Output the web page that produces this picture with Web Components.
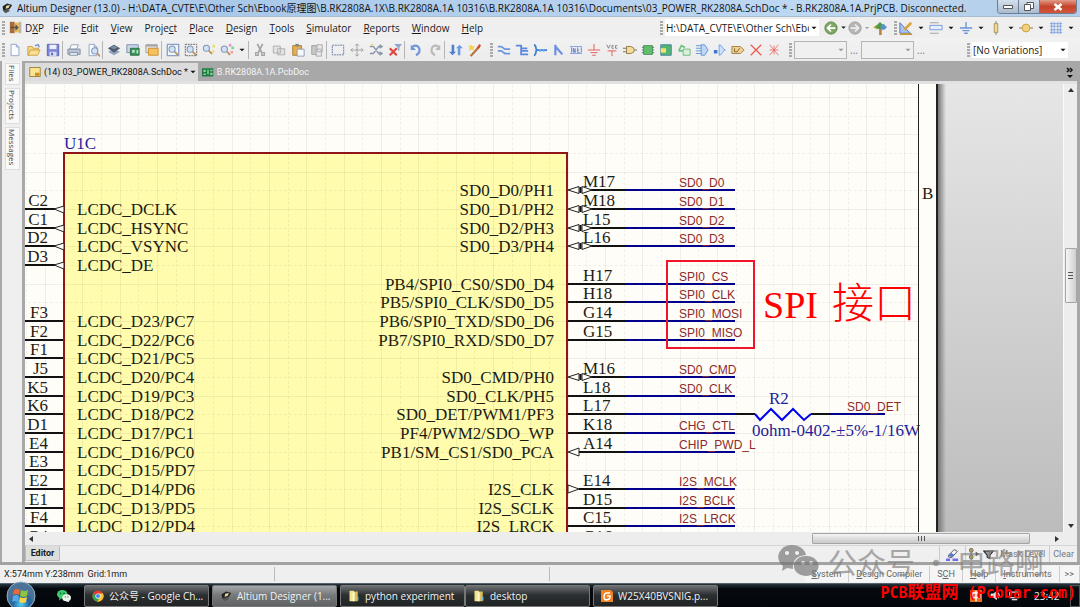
<!DOCTYPE html>
<html lang="en">
<head>
<meta charset="utf-8">
<title>Altium Designer (13.0)</title>
<style>
html, body { height: 100%; margin: 0; }
body { overflow: hidden; font: 10px/14px "Open Sans", "Noto Sans CJK SC", sans-serif; color: #1a1a1a; background: #efefef; }
</style>
</head>
<body>
<altium-app></altium-app>
<script>
const BASE = `
*{box-sizing:border-box}
button,select{font:inherit;color:inherit;margin:0;padding:0;border:0;background:none;border-radius:0}
button{display:flex;align-items:center;justify-content:center;white-space:nowrap}
select{appearance:none;outline:0}
a{color:inherit;text-decoration:none}
svg{display:block;flex:none}
`;
function define(name, css, html) {
  customElements.define(name, class extends HTMLElement {
    constructor() {
      super();
      const root = this.attachShadow({ mode: 'open' });
      root.innerHTML = `<style>${BASE}${css}</style>${typeof html === 'function' ? html(this) : html}`;
    }
  });
}

const page = '<path d="M3.500 1.500h6l3 3v10h-9z" fill="#fafcff" stroke="#8aa0c4"/><path d="M9.500 1.500v3h3" fill="#dbe6f5" stroke="#8aa0c4"/>';
const lens = (x, y) => `<circle cx="${x}" cy="${y}" r="3.500" fill="#cfe2f8" stroke="#8195b0" stroke-width="1.200"/><path d="M${x + 3} ${y + 3}l3.500 3.500" stroke="#c08a45" stroke-width="2"/>`;
const ICONS = {
  logo: '<path d="M2 6l6-4 7 2-4 6-8 1z" fill="#222"/><path d="M7 5l5-1-2 4-4 1z" fill="#e9d9a0"/><path d="M2 11l7-1 3 2-6 3z" fill="#555"/>',
  dxp: '<path d="M1 1h6v14H1z" fill="#a86b3c"/><path d="M7 2h8v12H7z" fill="#e8bb55"/><path d="M2 7h6V4l4 4-4 4V9H2z" fill="#5c5148"/><path d="M12 1h3v14h-3z" fill="#b9b5ac"/>',
  new: page,
  open: '<path d="M1 14V4h5l1 2h6v3" fill="#f5d78a" stroke="#c89a3c"/><path d="M1 14l3-6h11l-3 6z" fill="#fbdf93" stroke="#c89a3c"/><path d="M9 3l4-1 1 3" fill="none" stroke="#6d8fc4" stroke-width="1.500"/>',
  save: '<path d="M1.500 1.500h13v13h-13z" fill="#7d86d8" stroke="#565eae"/><path d="M4 2h8v5H4z" fill="#eef1fb"/><path d="M4 10h8v5H4z" fill="#d5d9f2"/><path d="M6 11h2v3H6z" fill="#565eae"/>',
  print: '<path d="M5 2h8l-2 5H3z" fill="#fff" stroke="#8c9cb5"/><path d="M1 7h14v6H1z" fill="#b8c3d4" stroke="#7a889f"/><path d="M3 11h9v3H3z" fill="#eef3f9" stroke="#7a889f"/>',
  preview: page + lens(10, 9),
  layers: '<path d="M8 7l7 3-7 4-7-4z" fill="#93a6bd"/><path d="M8 2l7 4-7 5-7-5z" fill="#4f5d73"/><path d="M8 3l4 2-4 2-4-2z" fill="#7f8ea5"/>',
  pcbwin: '<path d="M1 2h13v9H1z" fill="#cbd8ea" stroke="#7288ab"/><path d="M5 6h10v8H5z" fill="#35935a" stroke="#256b40"/><path d="M7 8h3v3H7zM12 8h2v4h-2z" fill="#bfe3c7"/>',
  schwin: '<path d="M1 2h13v9H1z" fill="#e3e3e3" stroke="#999"/><path d="M1 2h13v2H1z" fill="#a4a4a4"/><path d="M4 6h11v8H4z" fill="#f6c25c" stroke="#c98d28"/>',
  zoompage: '<path d="M1.500 1.500h13v13h-13z" fill="#f0f5fb" stroke="#8aa0c4" stroke-width="1.500"/>' + lens(7, 7),
  zoomsel: '<path d="M1.500 1.500h13v13h-13z" fill="none" stroke="#555" stroke-dasharray="2 1"/>' + lens(7, 7),
  zoomobj: lens(5, 6) + '<path d="M12 2h3v3h-3zM12 8h2v3h-2z" fill="#e9dc6b"/>',
  zoomcol: lens(5, 7) + '<path d="M10 1h3v3h-3z" fill="#e88fd8"/><path d="M13 4h3v3h-3z" fill="#79d68b"/><path d="M12 9h3v3h-3z" fill="#f29f9f"/>',
  cut: '<path d="M5 1l5 10M11 1L6 11" stroke="#a6a6a6" stroke-width="2"/><path d="M3 11h3v3H3zM10 11h3v3h-3z" fill="none" stroke="#a6a6a6" stroke-width="1.500"/>',
  copy: '<path d="M1.500 3.500h8v8h-8zM6.500 6.500h8v7h-8z" fill="#e2e2e2" stroke="#aaa"/>',
  paste: '<path d="M2 3h10v11H2z" fill="#e8b04a" stroke="#a8772a"/><path d="M5 1h4v3H5z" fill="#888"/><path d="M7 7h8v8H7z" fill="#f4f7fc" stroke="#8a98b5"/>',
  pastes: '<path d="M2 3h9v10H2z" fill="#c9c9c9" stroke="#9d9d9d"/><path d="M8 2h6v8H8zM7 7h6v8H7z" fill="#e9e9e9" stroke="#a5a5a5"/>',
  select: '<path d="M1.500 2.500h13v11h-13z" fill="none" stroke="#506a94" stroke-dasharray="2 1"/>',
  move: '<path d="M8 1v14M1 8h14M6 3l2-2 2 2M6 13l2 2 2-2M3 6L1 8l2 2M13 6l2 2-2 2" fill="none" stroke="#999"/>',
  shuffle: '<path d="M1 4h4l6 8h4M1 12h4l6-8h4M12 2l3 2-3 2M12 10l3 2-3 2" fill="none" stroke="#8a97a8" stroke-width="1.500"/><path d="M2 1h3v2H2z" fill="#e8df7a"/>',
  clear: '<path d="M2 6l8 8M10 6l-8 8" stroke="#e2473f" stroke-width="2.500"/><path d="M7 1h9l-3 4v4l-2-1V5z" fill="#8fa7cc"/>',
  undo: '<path d="M4 4c8-4 11 6 4 10" fill="none" stroke="#6f95d8" stroke-width="2.500"/><path d="M2 2v6h6z" fill="#6f95d8"/>',
  redo: '<path d="M12 4C4 0 1 10 8 14" fill="none" stroke="#b9b9b9" stroke-width="2.500"/><path d="M14 2v6H8z" fill="#b9b9b9"/>',
  updown: '<path d="M3 2h3v8h2l-4 4-4-4h3z" fill="#4f7fd0"/><path d="M10 14h3V6h3l-4-4-4 4h2z" fill="#6c9be4"/>',
  wand: '<path d="M3 15L13 4" stroke="#b5713a" stroke-width="2.500"/><path d="M3 1l2 3 3-1-2 3 2 3-4-2-3 2 1-4-2-2h3z" fill="#f6cf4c"/><path d="M11 6l3-4" stroke="#d64c3b" stroke-width="2.500"/>',
  wire: '<path d="M1 4h4l4 3h6M1 9h4l4 3h6" fill="none" stroke="#6c96e0" stroke-width="2"/>',
  bus: '<path d="M1 3h6v10h8M7 6h7M7 9h8" fill="none" stroke="#5c87dc" stroke-width="2"/>',
  harness: '<path d="M1 2c3 0 2 5 3 6-1 1 0 6-3 6M4 8h12" fill="none" stroke="#3f7fd0" stroke-width="2"/><path d="M7 7h2v3H7zM11 7h2v3h-2z" fill="#6cb3f0"/>',
  entry: '<path d="M5 2v12M5 4l8 9" fill="none" stroke="#6c8fe0" stroke-width="2.500"/>',
  net: '<path d="M1 4h14M1 12h14" stroke="#7f9fe0"/><path d="M3 5v6M5 11V6l2 5V6M9 8h2M10 5v6h2M14 5v6" stroke="#5677c4" fill="none"/>',
  gnd: '<path d="M8 1v7M1 8h14M4 11h8M6 14h4" stroke="#e0504a"/>',
  vcc: '<path d="M3 9h10M8 9v6" stroke="#e0504a"/><path d="M2 2l2 4 2-4M10 3H8v3h2M14 3h-2v3h2" fill="none" stroke="#777"/>',
  gate: '<path d="M0 6h4M0 10h4M12 8h4" stroke="#666"/><path d="M4 4h5q4 1 4 4t-4 4H4z" fill="#f3dc9c" stroke="#8b733d"/>',
  part: '<path d="M1 5h14M1 8h14M1 11h14" stroke="#496a8a"/><path d="M3 3h10v10H3z" fill="#5fbf6c" stroke="#438a4c"/>',
  sheet: '<path d="M2 2h12v12H2z" fill="#56b472" stroke="#3d7ea0"/><path d="M2 6h6v5H2z" fill="#f4e36c"/>',
  recycle: '<path d="M2 9l3-6 4 2M2 9h5" fill="none" stroke="#6cc482" stroke-width="2"/><path d="M7 7h8v7H7z" fill="#d9efdc" stroke="#66b877"/>',
  ports: '<path d="M1 3h7M1 6h7M1 9h7M1 12h7" stroke="#5d8fd6"/><path d="M7 2h4l4 6-4 6H7z" fill="#bcd8f6" stroke="#5d8fd6"/>',
  portx: '<path d="M1 8h4v4H1z" fill="#4474c8"/><path d="M7 2c4 0 3 5 7 6-4 1-3 6-7 6z" fill="#cfe2fa" stroke="#6f9be0"/>',
  tag: '<path d="M1 4h10l4 4-4 4H1z" fill="#eed090" stroke="#a07b3a"/><path d="M4 6v4h3l3-4" fill="none" stroke="#7b5c28"/>',
  noerc: '<path d="M2 2l12 12M14 2L2 14" stroke="#ee5a50" stroke-width="1.500"/>',
  noercs: '<path d="M3 2l10 12M13 2L3 14M8 3v10M3 8h10" stroke="#ee6a62"/>',
  back: '<circle cx="8" cy="8" r="7" fill="#7fa865" stroke="#55803c"/><path d="M13 8H5M8 4L4 8l4 4" fill="none" stroke="#fff" stroke-width="2"/>',
  fwd: '<circle cx="8" cy="8" r="7" fill="#b5b5b5" stroke="#999"/><path d="M3 8h8M8 4l4 4-4 4" fill="none" stroke="#eee" stroke-width="2"/>',
  home: '<path d="M7 8h3v8H7z" fill="#b98443"/><path d="M0 7l5-3v6z" fill="#e5b23c"/><path d="M2 7l6-6 4 4-3 4H6z" fill="#4f9a4a"/><path d="M9 5l3-2 4 4-3 3H9z" fill="#5b8fd0"/>',
  pencil: '<path d="M1 2v12h12z" fill="#a7c2ee" stroke="#4570bb"/><path d="M6 10l8-8" stroke="#dba63d" stroke-width="3"/><path d="M1 15h14" stroke="#c69834" stroke-width="2"/>',
  align: '<path d="M1 2h10M1 14h10" stroke="#999"/><path d="M1 5h14v5H1z" fill="#e3edfb" stroke="#6f95d0"/>',
  ground2: '<path d="M8 1v7M1 8h14M4 11h8M6 14h4" stroke="#6a93d6" stroke-width="1.500"/>',
  res: '<path d="M8 0v16" stroke="#777"/><path d="M6 3h4v10H6z" fill="#f1dc96" stroke="#a88e4c"/>',
  sig: '<path d="M0 8h16" stroke="#7c6b3d"/><circle cx="8" cy="8" r="4.500" fill="#f5d07c" stroke="#c49a45"/>',
  grid: '<path d="M3 1v14M6 1v14M10 1v14M13 1v14M1 3h14M1 6h14M1 10h14M1 13h14" stroke="#7f9fe0"/>',
  sch: '<path d="M1 2h14v12H1z" fill="#fbe38f" stroke="#8a6d1f"/><path d="M8 9h6v4H8z" fill="#c98d28"/>',
  pcb: '<path d="M0 3h15v11H0z" fill="#1f7a45"/><path d="M2 5h3v3H2zM7 5h2v6H7zM11 5h3v2h-3zM2 10h3v2H2zM11 9h3v3h-3z" fill="#8ad39c"/>',
  wechat: '<ellipse cx="6" cy="6" rx="6" ry="5" fill="#3ecf6d"/><path d="M3 10l-1 3 3-2z" fill="#3ecf6d"/><circle cx="4" cy="5" r="1" fill="#176b35"/><circle cx="8" cy="5" r="1" fill="#176b35"/><ellipse cx="11" cy="10" rx="5" ry="4" fill="#e9f6ec"/><path d="M13 13l1 2-4-1z" fill="#e9f6ec"/><circle cx="9.500" cy="9" r=".7" fill="#555"/><circle cx="12.500" cy="9" r=".7" fill="#555"/>',
  chrome: '<circle cx="8" cy="8" r="7.500" fill="#e33b2e"/><path d="M1.500 4.500A7.500 7.500 0 0 0 7 15.500L11 9z" fill="#2fa24c"/><path d="M8 4.500h6.600A7.500 7.500 0 0 1 7 15.500L11.500 8z" fill="#f7c92e"/><circle cx="8" cy="8" r="3.500" fill="#fff"/><circle cx="8" cy="8" r="2.700" fill="#4285f4"/>',
  folder: '<path d="M2 1h6v14H2z" fill="#f4e28c"/><path d="M8 2h5v13H8z" fill="#d9bd55"/><path d="M6 3h3v12H6z" fill="#fdf6c8"/><path d="M12 9h2v5h-2z" fill="#6fb1d8"/>',
  foxit: '<path d="M0 0h13l3 3v13H0z" fill="#f58220"/><path d="M12 4H8q-4 0-4 5t4 4q4 0 4-5H8" fill="none" stroke="#fff" stroke-width="2"/>',
  eraser: '<path d="M3 9l7-7 4 2-7 8-4-1z" fill="#f5f5f5" stroke="#39434f"/><path d="M3 9l3-3 4 2-3 4z" fill="#5978c8"/><path d="M0 13h5v3H0zM8 13h7v3H8z" fill="#6e6ee8"/>',
  mask: '<circle cx="3" cy="3" r="2.500" fill="#e6d83c" stroke="#444"/><path d="M3 6v4" stroke="#444"/><circle cx="3" cy="12" r="2.500" fill="#e6d83c" stroke="#444"/><path d="M9 5l4 3-4 3z" fill="#333"/>',
  funnel: '<path d="M1 3h14l-5 6v5l-4-2V9z" fill="#999" stroke="#222" stroke-width="1.500"/>',
  ime: '<path d="M0 0h16v16H0z" fill="#e86a1c"/><path d="M3 4h10v6H3zM8 1v14" fill="none" stroke="#fff" stroke-width="2"/>',
  speaker: '<path d="M1 5h4l5-4v14l-5-4H1z" fill="#ddd"/><path d="M12 4q3 4 0 8" fill="none" stroke="#ddd" stroke-width="1.500"/>',
  netw: '<path d="M1 3h13v8H1z" fill="none" stroke="#ddd" stroke-width="2"/><path d="M4 14h8" stroke="#ddd" stroke-width="2"/>',
  caret: '<path d="M4 6h8l-4 4z" fill="#111"/>',
  caretg: '<path d="M4 6h8l-4 4z" fill="#999"/>'
};
customElements.define('ed-icon', class extends HTMLElement {
  constructor() {
    super();
    const s = this.getAttribute('size') || 14;
    this.attachShadow({ mode: 'open' }).innerHTML =
      `<style>:host{display:block;flex:none}svg{display:block}</style><svg width="${s}" height="${s}" viewBox="0 0 16 16" fill="none" aria-hidden="true">${ICONS[this.getAttribute('name')]}</svg>`;
  }
});

const GRIP = '.grip{width:3px;height:14px;flex:none;background:repeating-linear-gradient(#a9a9a9 0 2px,transparent 2px 3px)}';
const tool = n => `<button class="t" aria-label="${n}"><ed-icon name="${n}"></ed-icon></button>`;

define('title-bar', `
:host{display:flex;height:17px;align-items:center;padding-left:1px;gap:4px;background:linear-gradient(90deg,#c9dcf0,#a8c8ea 20%,#b4d0ee 50%,#bdd8f3 75%,#b3cde8);border-bottom:1px solid #a9bccf;white-space:nowrap}
h1{flex:1;min-width:0;overflow:hidden;margin:0;font:inherit;color:#111}
.ctl{display:flex;align-self:flex-start;margin-right:3px;border:1px solid #6d7f93;border-top:0;border-radius:0 0 4px 4px;overflow:hidden}
button{width:21px;height:13px;background:linear-gradient(#d4dfeb,#a9bccf);border-right:1px solid #6d7f93}
button:last-child{width:36px;border:0;background:linear-gradient(#e39b8a,#c5432b 50%,#d0573d)}
`, `<ed-icon name="logo" size="12"></ed-icon><h1>Altium Designer (13.0) - H:\\DATA_CVTE\\E\\Other Sch\\Ebook原理图\\B.RK2808A.1X\\B.RK2808A.1A 10316\\B.RK2808A.1A 10316\\Documents\\03_POWER_RK2808A.SchDoc * - B.RK2808A.1A.PrjPCB. Disconnected.</h1>
<div class="ctl"><button aria-label="Minimize"><svg width="10" height="6"><path d="M.5 1.500h9v3h-9z" fill="#fff" stroke="#555"/></svg></button>
<button aria-label="Restore"><svg width="10" height="9"><path d="M3 .5h6.500v6H3z" fill="#fff" stroke="#555"/><path d="M.5 2.500h6v6h-6z" fill="#fff" stroke="#555"/></svg></button>
<button aria-label="Close"><svg width="10" height="8"><path d="M1.500 1l7 6M8.500 1l-7 6" stroke="#fff" stroke-width="2.500"/></svg></button></div>`);

const menus = [['F', 'ile'], ['E', 'dit'], ['V', 'iew'], ['', 'Proje', 'c', 't'], ['P', 'lace'], ['D', 'esign'], ['T', 'ools'], ['S', 'imulator'], ['R', 'eports'], ['W', 'indow'], ['H', 'elp']];
define('menu-bar', `
:host{display:flex;height:21px;align-items:center;padding:0 3px 0 2px;background:#efefef}
${GRIP}
nav{display:flex;gap:12px;margin-left:9px}
nav button{display:block}
.dxp{gap:3px;margin-left:4px}
.right{display:flex;align-items:center;margin-left:auto}
.addr{display:flex;align-items:center;width:154px;height:17px;background:#fff;margin:0 4px 0 2px}
select{flex:1;min-width:0;height:15px;padding-left:1px;overflow:hidden;text-overflow:clip}
.c{width:12px}.t{width:18px}
.go{display:flex}.go .t{width:16px}.go .c{width:8px}
`, `<span class="grip"></span><button class="dxp"><ed-icon name="dxp" size="13"></ed-icon><span>D<u>X</u>P</span></button>
<nav aria-label="Main">${menus.map(m => m.length > 2 ? `<button>${m[1]}<u>${m[2]}</u>${m[3]}</button>` : `<button><u>${m[0]}</u>${m[1]}</button>`).join('')}</nav>
<div class="right"><span class="grip"></span><div class="addr"><select aria-label="Document address"><option>H:\\DATA_CVTE\\E\\Other Sch\\Ebook</option></select><ed-icon name="caret" size="10"></ed-icon></div>
<div class="go">${tool('back')}<button class="c" aria-label="History"><ed-icon name="caret" size="9"></ed-icon></button>${tool('fwd')}<button class="c" aria-label="Forward history"><ed-icon name="caretg" size="8"></ed-icon></button></div>${tool('home')}<span class="grip" style="margin-left:5px"></span>
${['pencil', 'align', 'ground2', 'res', 'sig', 'grid'].map(n => tool(n) + `<button class="c" aria-label="${n} options"><ed-icon name="caret" size="10"></ed-icon></button>`).join('')}</div>`);

define('tool-bar', `
:host{display:flex;height:23px;align-items:center;padding:0 12px 0 2px;background:linear-gradient(#f2f2f2,#ececec)}
${GRIP}
.g{display:flex;align-items:center}
.t{width:19px;height:18px}
.n .t{width:18px}
.s{width:1px;height:18px;background:#b5b5b5;margin:0 1px 0 0;flex:none}
.c{width:12px;height:18px}
.box{display:flex;align-items:center;justify-content:flex-end;width:53px;height:18px;border:1px solid #b4b4b4;background:#f0f0f0}
select{flex:1;min-width:0;height:16px}
.var{display:flex;align-items:center;width:96px;height:16px;background:#fff;margin-left:2px;padding:0 0 0 1px}
.dots{width:14px;text-align:center;color:#777}
.last{margin-left:auto}
`, `<span class="grip"></span><div class="g">${tool('new')}${tool('open')}${tool('save')}<i class="s"></i>${tool('print')}${tool('preview')}<i class="s"></i>${tool('layers')}${tool('pcbwin')}${tool('schwin')}<i class="s"></i>${tool('zoompage')}</div>
<div class="g n">${tool('zoomsel')}${tool('zoomobj')}${tool('zoomcol')}</div><button class="c" aria-label="Zoom options"><ed-icon name="caret" size="10"></ed-icon></button>
<div class="g"><i class="s"></i>${tool('cut')}${tool('copy')}${tool('paste')}${tool('pastes')}<i class="s"></i>${tool('select')}${tool('move')}${tool('shuffle')}${tool('clear')}<i class="s"></i>${tool('undo')}${tool('redo')}<i class="s"></i>${tool('updown')}${tool('wand')}</div>
<span class="grip" style="margin:0 2px 0 6px"></span><div class="g n">${['wire', 'bus', 'harness', 'entry', 'net', 'gnd', 'vcc', 'gate', 'part', 'sheet', 'recycle', 'ports', 'portx', 'tag', 'noerc', 'noercs'].map(tool).join('')}</div>
<span class="grip" style="margin:0 2px 0 6px"></span><div class="box"><select aria-label="Filter one"></select><ed-icon name="caretg" size="10"></ed-icon></div><span class="dots">...</span><div class="box"><select aria-label="Filter two"></select><ed-icon name="caretg" size="10"></ed-icon></div><span class="dots">...</span>
<span class="grip last"></span><div class="var"><select aria-label="Variations"><option>[No Variations]</option></select><ed-icon name="caret" size="10"></ed-icon></div>`);

define('side-rail', `
:host{display:flex;flex-direction:column;gap:3px;width:25px;padding:2px 0 0 3px;border-left:2px solid #a8a8a8;border-right:3px solid #a8a8a8;background:#efefef;color:#444;flex:none}
button{writing-mode:vertical-rl;width:15px;padding:1px 0 3px;background:#f9f9f9;border:1px solid #ddd;font-size:8px;line-height:13px}
`, '<button>Files</button><button>Projects</button><button>Messages</button>');

define('doc-tabs', `
:host{display:flex;height:23px;padding-top:2px;background:#a8a8a8;border-bottom:3px solid #e2e2e2;font-family:Roboto,sans-serif;font-size:9px}
button{padding:0 0 0 4px}
.lead{margin-right:3px}
.on{background:#dcdcdc;color:#111}
.off{color:#f5f5f5}
.more{margin-left:auto;padding-right:3px}
`, `<button class="on"><ed-icon class="lead" name="sch" size="12"></ed-icon>(14) 03_POWER_RK2808A.SchDoc *<ed-icon name="caret" size="10"></ed-icon></button><button class="off"><ed-icon class="lead" name="pcb" size="12"></ed-icon>B.RK2808A.1A.PcbDoc</button>
<button class="more" aria-label="More documents"><svg width="8" height="11"><path d="M1 1l2 2-2 2M4 1l2 2-2 2" fill="none" stroke="#111" stroke-width="1.500"/><path d="M1 8h6l-3 3z" fill="#111"/></svg></button>`);

/* Schematic sheet: drawing coordinates start at the editor's top-left corner. */
const OX = 25, OY = 84;
const rowY = k => Math.round(209 + k * 56 / 3);
const L = [[0, 'C2', 'LCDC_DCLK'], [1, 'C1', 'LCDC_HSYNC'], [2, 'D2', 'LCDC_VSYNC'], [3, 'D3', 'LCDC_DE'],
  [6, 'F3', 'LCDC_D23/PC7'], [7, 'F2', 'LCDC_D22/PC6'], [8, 'F1', 'LCDC_D21/PC5'], [9, 'J5', 'LCDC_D20/PC4'], [10, 'K5', 'LCDC_D19/PC3'], [11, 'K6', 'LCDC_D18/PC2'], [12, 'D1', 'LCDC_D17/PC1'], [13, 'E4', 'LCDC_D16/PC0'], [14, 'E3', 'LCDC_D15/PD7'], [15, 'E2', 'LCDC_D14/PD6'], [16, 'E1', 'LCDC_D13/PD5'], [17, 'F4', 'LCDC_D12/PD4'], [18, 'G4', '']];
const R = [[-1, 'M17', 'SD0_D0/PH1', 'SD0_D0', 'b'], [0, 'M18', 'SD0_D1/PH2', 'SD0_D1', 'b'], [1, 'L15', 'SD0_D2/PH3', 'SD0_D2', 'b'], [2, 'L16', 'SD0_D3/PH4', 'SD0_D3', 'b'],
  [4, 'H17', 'PB4/SPI0_CS0/SD0_D4', 'SPI0_CS'], [5, 'H18', 'PB5/SPI0_CLK/SD0_D5', 'SPI0_CLK'], [6, 'G14', 'PB6/SPI0_TXD/SD0_D6', 'SPI0_MOSI'], [7, 'G15', 'PB7/SPI0_RXD/SD0_D7', 'SPI0_MISO'],
  [9, 'M16', 'SD0_CMD/PH0', 'SD0_CMD', 'b'], [10, 'L18', 'SD0_CLK/PH5', 'SD0_CLK'], [11, 'L17', 'SD0_DET/PWM1/PF3', ''], [12, 'K18', 'PF4/PWM2/SDO_WP', 'CHG_CTL'], [13, 'A14', 'PB1/SM_CS1/SD0_PCA', 'CHIP_PWD_L', 'o'],
  [15, 'E14', 'I2S_CLK', 'I2S_MCLK', 'i'], [16, 'D15', 'I2S_SCLK', 'I2S_BCLK'], [17, 'C15', 'I2S_LRCK', 'I2S_LRCK'], [18, 'G16', '', '']];
const marks = {
  b: y => `<path class="m" d="M568 ${y}l11-3.500v7zM592 ${y}l-10-3.500v7z"/><path class="k" d="M580.500 ${y - 3}v6"/>`,
  o: y => `<path class="m" d="M568 ${y}l11-4v8z"/>`,
  i: y => `<path class="m" d="M579 ${y}l-11-4v8z"/>`
};
const text = (x, y, s, c, a) => s ? `<text x="${x}" y="${y}" class="${c}"${a ? ' text-anchor="end"' : ''}>${s}</text>` : '';
define('schematic-sheet', `
:host{display:flex;flex:1;min-width:0;min-height:0;overflow:hidden;background:linear-gradient(#e6e6e6,#bcbcbc)}
.sheet{width:913px;flex:none;background:#fffdf8;border-right:2px solid #222;overflow:hidden}
.shade{width:8px;flex:none;background:linear-gradient(90deg,#777,transparent)}
text{font-family:"Liberation Serif",serif;font-size:17px;fill:#1c1c14}
.ref{fill:#22229a}
.net{font-family:"Liberation Sans",sans-serif;font-size:12px;fill:#8e2a2a}
.note{font-size:38px;fill:#f00}
.cn{font-family:"Noto Sans CJK SC",sans-serif;font-size:42px;font-weight:300;fill:#f00}
.k{stroke:#111;stroke-width:2;fill:none}.w{stroke:#00008c;stroke-width:2;fill:none}
.m{fill:#fffdf8;stroke:#222}
`, `<div class="sheet"><svg width="912" height="1000" viewBox="${OX} ${OY} 912 1000">
<defs><pattern id="g" width="112" height="112" patternUnits="userSpaceOnUse" x="45" y="97"><path d="M.5 0v112M37.500 0v112M75.500 0v112M0 .5h112M0 37.500h112M0 75.500h112" stroke="#000" stroke-opacity=".06"/><path d="M19.500 0v112M56.500 0v112M93.500 0v112M0 19.500h112M0 56.500h112M0 93.500h112" stroke="#000" stroke-opacity=".05" stroke-dasharray="3 2"/></pattern></defs>
<path d="M64 153h503v900H64z" fill="#fffcae"/><path d="M25 84h893v1000H25z" fill="url(#g)"/>
<path d="M64 1053V153h503v900" fill="none" stroke="#8e1616" stroke-width="2"/>
${L.map(([k, p, n]) => { const y = rowY(k); return `<path class="k" d="M25 ${y}H${k < 4 ? 55 : 63}"/>${k < 4 ? `<path class="m" d="M54 ${y}l10-3v7z"/>` : ''}${text(48, y - 3, p, 'p', 1)}${text(77, y + 6, n, 'p')}`; }).join('')}
${R.map(([k, p, n, t, m]) => { const y = rowY(k); return `<path class="k" d="M${m === 'b' ? 590 : m ? 579 : 568} ${y}H625"/><path class="w" d="M625 ${y}H735"/>${m ? marks[m](y) : ''}${text(583, y - 3, p, 'p')}${text(554, y + 6, n, 'p', 1)}${text(679, y - 3, t, 'net')}`; }).join('')}
<path class="k" d="M735 414h20M811 414h18"/><path class="w" d="M829 414h56"/><path d="M755 414l5 6 11-11 11 11 11-11 11 11 7-6" fill="none" stroke="#0000f0" stroke-width="2"/>
${text(64, 149, 'U1C', 'ref')}${text(769, 404, 'R2', 'ref')}${text(752, 436, '0ohm-0402-±5%-1/16W', 'ref')}${text(847, 411, 'SD0_DET', 'net')}
<path d="M667 261h87v87h-87z" fill="none" stroke="#f0142d" stroke-width="2"/>
${text(763, 318, 'SPI', 'note')}${text(832, 318, '接口', 'cn')}
<path d="M918.500 84v1000" stroke="#222"/>${text(922, 199, 'B', 'p')}
</svg></div><div class="shade"></div>`);

define('scroll-bar', `
:host{display:flex;flex:none;align-items:center;background:#ededed;justify-content:space-between}
:host([vertical]){flex-direction:column;width:14px;border-left:1px solid #fafafa}
:host(:not([vertical])){height:14px;border-bottom:1px solid #d5d5d5;padding:0 14px 0 0}
.thumb{display:flex;align-items:center;justify-content:center;border:1px solid #a5a5a5;border-radius:1px}
:host([vertical]) .thumb{width:12px;height:55px;background:linear-gradient(90deg,#f6f6f6,#cfcfcf)}
:host(:not([vertical])) .thumb{width:218px;height:11px;background:linear-gradient(#f4f4f4,#c9c9c9);margin-right:21px}
button{width:12px;height:12px}
.fill{flex:1}.above{flex:152}.below{flex:217}
`, el => el.hasAttribute('vertical')
  ? `<button aria-label="Up"><svg width="6" height="4"><path d="M0 4h6L3 0z" fill="#333"/></svg></button><span class="above"></span><div class="thumb"><svg width="5" height="7"><path d="M0 .5h5M0 3.500h5M0 6.500h5" stroke="#555"/></svg></div><span class="below"></span><button aria-label="Down"><svg width="6" height="4"><path d="M0 0h6L3 4z" fill="#333"/></svg></button>`
  : `<button aria-label="Left"><svg width="4" height="6"><path d="M4 0v6L0 3z" fill="#333"/></svg></button><span class="fill"></span><div class="thumb"><svg width="7" height="5"><path d="M.5 0v5M3.500 0v5M6.500 0v5" stroke="#555"/></svg></div><button aria-label="Right"><svg width="4" height="6"><path d="M0 0v6l4-3z" fill="#333"/></svg></button>`);

define('editor-bar', `
:host{display:flex;height:16px;flex:none;background:#efefef;font-family:Roboto,sans-serif;font-size:9px}
.ed{width:35px;font-weight:bold;background:#dedede;border:1px solid #bbb;border-top:0;height:15px}
.r{display:flex;margin-left:auto;color:#777}
.r button{border-left:1px solid #ccc;padding:0 3px;gap:3px}
.r .pen{width:26px}
.r .mask{gap:2px}
.r .level{border:0;padding-right:4px}
`, `<button class="ed">Editor</button><div class="r"><button aria-label="Highlight pen" class="pen"><ed-icon name="eraser" size="13"></ed-icon></button><button class="mask" aria-label="Mask"><ed-icon name="mask" size="12"></ed-icon><ed-icon name="funnel" size="11"></ed-icon></button><button class="level">Mask Level</button><button>Clear</button></div>`);

define('status-bar', `
:host{display:flex;height:18px;flex:none;align-items:center;background:#efefef;font-family:Roboto,sans-serif;font-size:9px;padding-left:4px}
.cell{flex:none;width:271px;height:14px;border-right:1px solid #bbb;white-space:pre}
.two{width:275px}
.r{display:flex;margin-left:auto;color:#666}
button{padding:0 7px;height:16px;border-right:1px solid #ccc;background:#f5f5f5}
button:last-child{padding:0 5px}
span span{margin-left:4px}
`, `<span class="cell">X:574mm Y:238mm<span>Grid:1mm</span></span><span class="cell two"></span><div class="r"><button><u>S</u>ystem</button><button><u>D</u>esign Compiler</button><button>S<u>C</u>H</button><button><u>H</u>elp</button><button><u>I</u>nstruments</button><button>&gt;&gt;</button></div>`);

define('task-button', `
:host{display:block;width:125px;flex:none}
button{width:100%;height:22px;justify-content:flex-start;gap:5px;padding-left:7px;color:#f2f2f2;background:linear-gradient(#6d7072,#2b2f31 45%,#202425);border:1px solid #777;border-radius:2px}
:host([active]) button{background:linear-gradient(#a5a8aa,#77797b 45%,#5f6264)}
`, el => `<button><ed-icon name="${el.getAttribute('icon')}" size="12"></ed-icon><slot></slot></button>`);

define('task-bar', `
:host{display:flex;height:24px;flex:none;align-items:center;background:linear-gradient(#26343c,#060a0e 20%,#03060a);color:#eee;border-top:1px solid #56636b}
.orb{width:28px;height:24px;margin-left:7px;overflow:visible}
.wx{margin:0 13px 0 22px}
.b{display:flex;gap:3px}.j{display:flex}
.tray{display:flex;align-items:center;gap:8px;margin-left:auto}
.tray time{width:28px;margin-left:6px}
.desk{width:10px;height:22px;border:1px solid #555}
`, `<button class="orb" aria-label="Start"><svg width="30" height="30" viewBox="0 0 30 30"><defs><radialGradient id="o" cy=".8"><stop offset="0" stop-color="#4fd0f7"/><stop offset=".6" stop-color="#23629c"/><stop offset="1" stop-color="#4c7396"/></radialGradient></defs><circle cx="15" cy="15" r="14" fill="url(#o)" stroke="#8fb0c6"/><path d="M8 9q3-2 6 0l-1 5q-3-2-6 0z" fill="#ee6a35"/><path d="M15 9q4 2 7 0l-1 6q-3 2-7 0z" fill="#8cc63e"/><path d="M7 15q3-2 6 0l-1 6q-3-2-6 0z" fill="#56a8e8"/><path d="M14 16q3 2 7 0l-1 5q-3 2-7 0z" fill="#fbd043"/></svg></button>
<button class="wx" aria-label="WeChat"><ed-icon name="wechat" size="14"></ed-icon></button>
<div class="b"><task-button icon="chrome">公众号 - Google Ch...</task-button><task-button icon="logo" active>Altium Designer (1...</task-button><div class="j"><task-button icon="folder">python experiment</task-button><task-button icon="folder">desktop</task-button></div><task-button icon="foxit">W25X40BVSNIG.p...</task-button></div>
<div class="tray"><ed-icon name="ime" size="12"></ed-icon><ed-icon name="speaker" size="11"></ed-icon><ed-icon name="netw" size="11"></ed-icon><time>23:42</time><button class="desk" aria-label="Show desktop"></button></div>`);

define('water-mark', `
:host{position:absolute;right:0;bottom:0;pointer-events:none;white-space:nowrap}
.wm{position:absolute;right:36px;bottom:30px;display:flex;align-items:center;gap:9px;color:#808080;opacity:.65;font:29px/32px "Noto Sans CJK SC",sans-serif}
.url{position:absolute;right:4px;bottom:4px;color:#f00;font:bold 15px/20px "DejaVu Sans Mono","Noto Sans CJK SC",monospace}
.url span{font-family:"Noto Sans CJK SC",sans-serif;font-size:17px}
`, `<div class="wm"><svg width="41" height="32" viewBox="0 0 41 32"><path fill-rule="evenodd" d="M14 0a14 12 0 0 1 14 10q-14 1-13 14l-6-1-5 3 1-5A14 12 0 0 1 14 0zM9 6a2 2 0 1 0 .1 0zM19 6a2 2 0 1 0 .1 0z" fill="#707070"/><path fill-rule="evenodd" d="M29 11a12 10 0 0 1 8 17l1 4-5-2A12 10 0 1 1 29 11zM25 16a2 2 0 1 0 .1 0zM33 16a2 2 0 1 0 .1 0z" fill="#707070"/></svg><span>公众号 · 电路啊</span></div><div class="url">PCB<span>联盟网</span> (Pcbbar.com)</div>`);

define('altium-app', `
:host{display:flex;flex-direction:column;height:100vh;position:relative;overflow:hidden}
.work{display:flex;flex:1;min-height:0;border-bottom:3px solid #a2a2a2}
.doc{display:flex;flex-direction:column;flex:1;min-width:0;border-right:3px solid #a8a8a8}
.view{display:flex;flex:1;min-height:0}
`, `<title-bar></title-bar><menu-bar></menu-bar><tool-bar></tool-bar>
<div class="work"><side-rail></side-rail><div class="doc"><doc-tabs></doc-tabs><div class="view"><schematic-sheet></schematic-sheet><scroll-bar vertical></scroll-bar></div><scroll-bar></scroll-bar><editor-bar></editor-bar></div></div>
<status-bar></status-bar><task-bar></task-bar><water-mark></water-mark>`);
</script>
</body>
</html>
